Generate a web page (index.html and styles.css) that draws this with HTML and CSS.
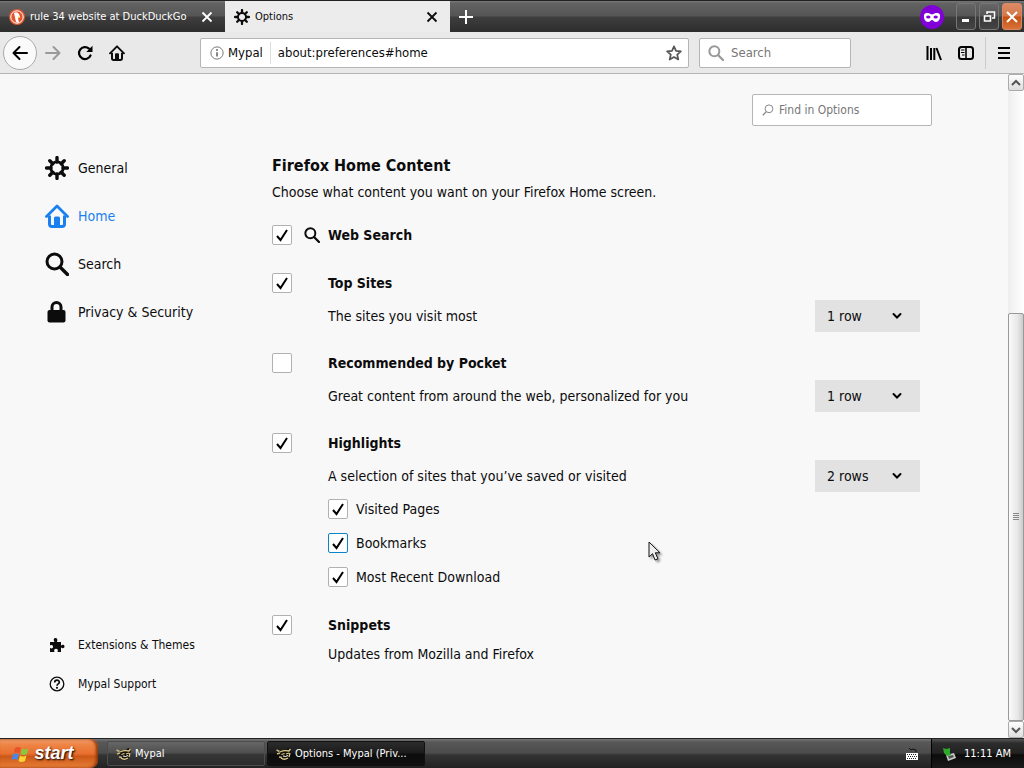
FILE: index.html
```html
<!DOCTYPE html>
<html lang="en">
<head>
    <meta charset="UTF-8">
    <meta name="viewport" content="width=device-width, initial-scale=1.0">
    <title>Options</title>
    <link rel="stylesheet" href="styles.css">
</head>
<body>
    <svg class="defs" width="0" height="0" aria-hidden="true">
        <symbol id="gear" viewBox="0 0 24 24">
            <circle cx="12" cy="12" r="6.2" fill="none" stroke="currentColor" stroke-width="2.8"/>
            <path d="M12 6V1.6M12 18v4.4M6 12H1.6M18 12h4.4M7.8 7.8L4.8 4.8M16.2 7.8l3-3M7.8 16.2l-3 3M16.2 16.2l3 3" stroke="currentColor" stroke-width="3.4" stroke-linecap="round"/>
        </symbol>
        <symbol id="house" viewBox="0 0 24 24">
            <path d="M1.500 12.5L12 2l10.500 10.500" fill="none" stroke="currentColor" stroke-width="2.800" stroke-linecap="round" stroke-linejoin="round"/>
            <path d="M4.500 11.500V20q0 2.500 2.500 2.500h10q2.500 0 2.500-2.500v-8.500" fill="none" stroke="currentColor" stroke-width="3"/>
            <path d="M9 22v-8q0-1.500 1.500-1.500h3q1.500 0 1.500 1.500v8z" fill="currentColor"/>
        </symbol>
        <symbol id="glass" viewBox="0 0 24 24">
            <circle cx="9.500" cy="9.500" r="7.500" fill="none" stroke="currentColor" stroke-width="3"/>
            <path d="M15 15l7.500 7.500" stroke="currentColor" stroke-width="3.400" stroke-linecap="round"/>
        </symbol>
        <symbol id="cross" viewBox="0 0 12 12">
            <path d="M1.500 1.500l9 9M10.500 1.500l-9 9" stroke="currentColor" stroke-width="1.800"/>
        </symbol>
        <symbol id="cat" viewBox="0 0 16 16">
            <path d="M5 4l4 1 3-3 3 1-.5 5-2 5-5 1.500-3-2 2-2-4-2z" fill="#15120c"/>
            <path d="M.5 4l3 1.500M1 8l3-1M3 11l3 .5" stroke="#c9b67e" stroke-width="1.500"/>
            <path d="M4 6q4-2 9-1l1.500-2M5.500 8.500l3-1M10 8l3-1M5 12q3 2.500 7 0M14 7l-1 4" stroke="#dcc98c" stroke-width="1.300" fill="none"/>
            <path d="M7 10l2.500.5L12 9.500" stroke="#fff" stroke-width="1" fill="none"/>
        </symbol>
    </svg>

    <header class="tabbar">
        <div class="tab">
            <svg class="favicon" viewBox="0 0 16 16">
                <circle cx="8" cy="8" r="8" fill="#e0562f"/>
                <circle cx="8" cy="8" r="6.200" fill="none" stroke="#fff" stroke-width="1"/>
                <path d="M5 4q3-2 5 1l1 3-2 1 1 5-3-1z" fill="#fff"/>
                <path d="M8.500 7.500l3 .5-2 1.500z" fill="#fc3"/>
            </svg>
            <span class="tab_label">rule 34 website at DuckDuckGo</span>
            <button class="tab_close" aria-label="Close tab"><svg><use href="#cross"/></svg></button>
        </div>
        <div class="tab selected">
            <svg class="favicon"><use href="#gear"/></svg>
            <span class="tab_label">Options</span>
            <button class="tab_close" aria-label="Close tab"><svg><use href="#cross"/></svg></button>
        </div>
        <button class="newtab" aria-label="New tab">
            <svg viewBox="0 0 16 16"><path d="M8 1v14M1 8h14" stroke="#fff" stroke-width="2"/></svg>
        </button>
        <svg class="private" viewBox="0 0 24 24">
            <circle cx="12" cy="12" r="12" fill="#8000d7"/>
            <path d="M4 10c1-3 5-2 8-.5 3-1.500 7-2.500 8 .5.500 4-1.500 7-4 7-2 0-3-2-4-2s-2 2-4 2c-2.500 0-4.500-3-4-7z" fill="#fff"/>
            <ellipse cx="8.300" cy="12" rx="2.200" ry="1.500" fill="#8000d7"/>
            <ellipse cx="15.700" cy="12" rx="2.200" ry="1.500" fill="#8000d7"/>
        </svg>
        <div class="winbuttons">
            <button aria-label="Minimize"><svg viewBox="0 0 16 16"><path d="M4 11.500h7" stroke="#fff" stroke-width="3"/></svg></button>
            <button aria-label="Restore"><svg viewBox="0 0 16 16"><path d="M6 5V3h7.500v6H11" fill="none" stroke="#fff" stroke-width="1.500"/><path d="M3.500 7h6v5h-6z" fill="none" stroke="#fff" stroke-width="1.600"/></svg></button>
            <button class="close" aria-label="Close"><svg viewBox="0 0 16 16"><path d="M3 3l10 10M13 3L3 13" stroke="#fff" stroke-width="2"/></svg></button>
        </div>
    </header>

    <nav class="toolbar">
        <button class="back" aria-label="Back"><svg viewBox="0 0 16 16"><path d="M15 8H1.500M7.500 2l-6 6 6 6" fill="none" stroke="#000" stroke-width="2" stroke-linecap="round" stroke-linejoin="round"/></svg></button>
        <button class="tool" aria-label="Forward"><svg viewBox="0 0 16 16"><path d="M1 8h13.500M8.500 2l6 6-6 6" fill="none" stroke="#999" stroke-width="2" stroke-linecap="round" stroke-linejoin="round"/></svg></button>
        <button class="tool" aria-label="Reload"><svg viewBox="0 0 16 16"><path d="M13.500 10.500A6 6 0 1 1 12 3.600" fill="none" stroke="#000" stroke-width="2.200" stroke-linecap="round"/><path d="M15.500.8V7H9.300z"/></svg></button>
        <button class="tool" aria-label="Home"><svg><use href="#house"/></svg></button>
        <div class="urlbar">
            <svg class="info" viewBox="0 0 16 16"><circle cx="8" cy="8" r="7" fill="none" stroke="#666"/><path d="M8 7v5" stroke="#666" stroke-width="1.800"/><circle cx="8" cy="4.500" r="1.100" fill="#666"/></svg>
            <span class="identity">Mypal</span>
            <input type="text" value="about:preferences#home" aria-label="Address">
            <button class="star" aria-label="Bookmark this page"><svg viewBox="0 0 16 16"><path d="M8 1.300l2 4.500 4.900.5-3.700 3.300 1.100 4.900L8 12l-4.300 2.500 1.100-4.900L1.100 6.300 6 5.800z" fill="none" stroke="#555" stroke-width="1.700" stroke-linejoin="round"/></svg></button>
        </div>
        <div class="searchbar">
            <svg><use href="#glass"/></svg>
            <input type="text" placeholder="Search" aria-label="Search the web">
        </div>
        <div class="toolbar_end">
            <button class="tool" aria-label="Library"><svg viewBox="0 0 16 16"><path d="M1.500 1v14M5 3v12M8.300 3v12M10.500 3L15 15" stroke="#000" stroke-width="2"/></svg></button>
            <button class="tool" aria-label="Sidebars"><svg viewBox="0 0 16 16"><rect x="1" y="2" width="14" height="12" rx="2.500" fill="none" stroke="#000" stroke-width="2"/><path d="M8 2v12" stroke="#000" stroke-width="1.600"/><path d="M3 5h3.500M3 7.500h3.500M4 10h2.500" stroke="#000"/></svg></button>
            <button class="tool menu" aria-label="Menu"><svg viewBox="0 0 16 16"><path d="M2 3h12M2 8h12M2 13h12" stroke="#000" stroke-width="2"/></svg></button>
        </div>
    </nav>

    <div class="content">
        <aside class="sidebar">
            <a href="#general"><svg><use href="#gear"/></svg>General</a>
            <a href="#home" class="current"><svg><use href="#house"/></svg>Home</a>
            <a href="#search"><svg><use href="#glass"/></svg>Search</a>
            <a href="#privacy"><svg viewBox="0 0 24 24"><path d="M7 11V7a4.500 4.500 0 0 1 9 0V11" fill="none" stroke="currentColor" stroke-width="3"/><rect x="2.500" y="10" width="18" height="12.500" rx="2" fill="currentColor"/></svg>Privacy &amp; Security</a>
            <div class="sidebar_foot">
                <a href="#extensions"><svg viewBox="0 0 16 16"><path d="M1 5h4.500C4 2.500 5 1 6.500 1S9 2.500 8 5h4v3.500c2-1.300 3.500-.5 3.500 1s-1.500 2.300-3.500 1V15H8.500c1-2-.2-3.200-1.500-3.200S4.500 13 5.500 15H1v-4c2 1 3 0 3-1.300S3 7.500 1 8.500z" fill="currentColor"/></svg>Extensions &amp; Themes</a>
                <a href="#support"><svg viewBox="0 0 16 16"><circle cx="8" cy="8" r="6.800" fill="none" stroke="currentColor" stroke-width="1.300"/><path d="M5.700 6.500C5.700 3.300 10.300 3.500 10.300 6.200 10.300 8 8 7.700 8 9.700" fill="none" stroke="currentColor" stroke-width="1.700"/><circle cx="8" cy="11.800" r="1.100" fill="currentColor"/></svg>Mypal Support</a>
            </div>
        </aside>

        <main>
            <div class="find">
                <svg viewBox="0 0 12 12"><circle cx="7" cy="4.800" r="3.900" fill="none" stroke="#888"/><path d="M4.300 7.600L.8 11.200" stroke="#888" stroke-width="1.300"/></svg>
                <input type="text" placeholder="Find in Options" aria-label="Find in Options">
            </div>
            <h1>Firefox Home Content</h1>
            <p class="intro">Choose what content you want on your Firefox Home screen.</p>

            <section>
                <label class="option"><input type="checkbox" checked><svg><use href="#glass"/></svg><b>Web Search</b></label>
            </section>
            <section>
                <label class="option"><input type="checkbox" checked><b>Top Sites</b></label>
                <div class="details">
                    <label for="topsites">The sites you visit most</label>
                    <select id="topsites"><option>1 row</option><option>2 rows</option></select>
                </div>
            </section>
            <section>
                <label class="option"><input type="checkbox"><b>Recommended by Pocket</b></label>
                <div class="details">
                    <label for="pocket">Great content from around the web, personalized for you</label>
                    <select id="pocket"><option>1 row</option><option>2 rows</option></select>
                </div>
            </section>
            <section>
                <label class="option"><input type="checkbox" checked><b>Highlights</b></label>
                <div class="details">
                    <label for="highlights">A selection of sites that you’ve saved or visited</label>
                    <select id="highlights"><option>1 row</option><option selected>2 rows</option></select>
                </div>
                <div class="suboptions">
                    <label><input type="checkbox" checked>Visited Pages</label>
                    <label><input type="checkbox" class="hover" checked>Bookmarks</label>
                    <label><input type="checkbox" checked>Most Recent Download</label>
                </div>
            </section>
            <section>
                <label class="option"><input type="checkbox" checked><b>Snippets</b></label>
                <p class="details note">Updates from Mozilla and Firefox</p>
            </section>
        </main>

        <div class="scrollbar">
            <button aria-label="Scroll up"><svg viewBox="0 0 10 10"><path d="M1 7l4-4 4 4" fill="none" stroke="#555" stroke-width="2"/></svg></button>
            <div class="track"></div>
            <div class="thumb"><svg viewBox="0 0 6 8"><path d="M0 .5h6M0 2.500h6M0 4.500h6M0 6.500h6" stroke="#888"/></svg></div>
            <button aria-label="Scroll down"><svg viewBox="0 0 10 10"><path d="M1 3l4 4 4-4" fill="none" stroke="#555" stroke-width="2"/></svg></button>
        </div>
        <svg class="cursor" viewBox="0 0 14 21"><path d="M1 1v15l3.500-3.300L7 19l3-1.200-2.700-6H12z" fill="#eee" stroke="#111"/></svg>
    </div>

    <footer class="taskbar">
        <button class="start">
            <svg viewBox="0 0 20 18">
                <path d="M5 3q3-2 6 0L9.500 8.500q-3-2-6 0z" fill="#e8532a"/>
                <path d="M12 3.500q3 2 6.500 0L17 9q-3.500 2-6.500 0z" fill="#8cc63f"/>
                <path d="M3 9.500q3-2 6 0L7.500 15q-3-2-6 0z" fill="#4a86e8"/>
                <path d="M10 10.500q3 2 6.500 0L15 16q-3.500 2-6.500 0z" fill="#fbd232"/>
            </svg>
            start
        </button>
        <button class="task"><svg><use href="#cat"/></svg><span>Mypal</span></button>
        <button class="task active"><svg><use href="#cat"/></svg><span>Options - Mypal (Priv...</span></button>
        <svg class="keyboard" viewBox="0 0 14 14"><path d="M4 1l2 2 2-1 3 1V5" fill="none" stroke="#111"/><rect x="1" y="6" width="12" height="7" fill="#fff"/><path d="M2 7.500h10M3 9.500h9M2 11.500h10" stroke="#222" stroke-dasharray="1 1"/></svg>
        <div class="tray">
            <svg viewBox="0 0 16 16"><path d="M5 9l8-2 2 5-8 3z" fill="#c9cdc9"/><path d="M7 10l5-1 1 2-5 2z" fill="#555"/><path d="M2 2l3 1 4-1v5l1 2-4 1-3-3z" fill="#2fa62c"/></svg>
            <span>11:11 AM</span>
        </div>
    </footer>
</body>
</html>
```
FILE: styles.css
```css
*{
    box-sizing: border-box;
}
html, body{
    margin: 0;
    height: 100%;
}
body{
    display: flex;
    flex-direction: column;
    overflow: hidden;
    font-family: Tahoma, 'DejaVu Sans Condensed', 'Noto Sans', sans-serif;
    font-size: 14px;
    color: #0c0c0d;
    background: #f9f9fa;
}
button, input, select{
    font: inherit;
    color: inherit;
}
button{
    display: flex;
    align-items: center;
    justify-content: center;
    border: 0;
    padding: 0;
    background: none;
}
input[type=text]{
    flex: 1;
    min-width: 0;
    border: 0;
    padding: 0;
    outline: 0;
    background: none;
}
input::placeholder{
    color: #777;
    opacity: 1;
}
svg{
    flex: none;
}
.defs{
    position: absolute;
}

/* tab strip */
.tabbar{
    display: flex;
    align-items: center;
    height: 32px;
    border-top: 1px solid #222;
    background: linear-gradient(#777 0, #626262 8%, #555 48%, #3e3e3e 52%, #2d2d2d 100%);
}
.tab{
    display: flex;
    align-items: center;
    width: 225px;
    height: 31px;
    padding: 0 12px 0 9px;
    color: #fff;
    font-size: 11px;
}
.tab.selected{
    color: #0c0c0d;
    background: #ececec;
}
.favicon{
    width: 16px;
    height: 16px;
    margin-right: 5px;
}
.tab_label{
    flex: 1;
    white-space: nowrap;
}
.tab_close svg{
    width: 12px;
    height: 12px;
}
.newtab{
    width: 32px;
    height: 31px;
}
.newtab svg{
    width: 16px;
    height: 16px;
}
.private{
    width: 24px;
    height: 24px;
    margin: 0 12px 0 auto;
}
.winbuttons{
    display: flex;
    gap: 3px;
    padding-right: 2px;
}
.winbuttons button{
    width: 20px;
    height: 27px;
    border: 1px solid #777;
    border-radius: 3px;
    background: linear-gradient(#666, #555 48%, #383838 52%, #444);
}
.winbuttons .close{
    border-color: #d98662;
    background: linear-gradient(#dc8b68, #d47748 48%, #c45010 52%, #d8743c);
}
.winbuttons svg{
    width: 16px;
    height: 16px;
}

/* navigation */
.toolbar{
    display: flex;
    align-items: center;
    height: 42px;
    padding: 0 3px;
    border-bottom: 1px solid #b4b4b4;
    background: #e9e9e9;
}
.back{
    width: 34px;
    height: 34px;
    border: 1px solid #aaa;
    border-radius: 50%;
    background: #fafafa;
}
.tool{
    width: 32px;
    height: 32px;
}
.back svg, .tool svg{
    width: 16px;
    height: 16px;
}
.urlbar, .searchbar{
    display: flex;
    align-items: center;
    height: 30px;
    border: 1px solid #b5b5b5;
    border-radius: 2px;
    background: #fff;
    font-size: 13px;
}
.urlbar{
    flex: 1;
    margin: 0 10px 0 67px;
    padding: 0 6px 0 9px;
}
.info{
    width: 14px;
    height: 14px;
    margin-right: 4px;
}
.identity{
    padding-right: 7px;
    margin-right: 7px;
    border-right: 1px solid #ddd;
    line-height: 22px;
}
.star svg{
    width: 16px;
    height: 16px;
}
.searchbar{
    width: 152px;
    padding: 0 8px;
}
.searchbar svg{
    width: 16px;
    height: 16px;
    margin-right: 7px;
    color: #999;
}
.toolbar_end{
    display: flex;
    margin-left: 67px;
}
.menu{
    margin-left: 3px;
    border-left: 1px solid #ccc;
    width: 36px;
}

/* preferences page */
.content{
    position: relative;
    flex: 1;
    min-height: 0;
    display: flex;
    background: #f8f8f8;
}
.sidebar{
    display: flex;
    flex-direction: column;
    width: 272px;
    padding: 70px 0 35px 45px;
}
.sidebar a{
    display: flex;
    align-items: center;
    gap: 9px;
    height: 48px;
    color: inherit;
    text-decoration: none;
}
.sidebar a svg{
    width: 24px;
    height: 24px;
}
.sidebar .current{
    color: #1a80f0;
}
.sidebar_foot{
    margin-top: auto;
    font-size: 12px;
}
.sidebar_foot a{
    height: 39px;
}
.sidebar_foot a svg{
    padding: 0 4px;
}
main{
    flex: 1;
    max-width: 660px;
    padding-top: 20px;
}
.find{
    display: flex;
    align-items: center;
    width: 180px;
    height: 32px;
    margin: 0 0 28px auto;
    padding: 0 9px;
    border: 1px solid #b5b5b5;
    border-radius: 2px;
    background: #fff;
    font-size: 12px;
}
.find svg{
    width: 12px;
    height: 12px;
    margin-right: 5px;
}
h1{
    margin: 0 0 4px;
    font-size: 16px;
    line-height: 24px;
}
.intro{
    margin: 0 0 23px;
    line-height: 20px;
}
section{
    display: flow-root;
    margin: 0 12px 21px 0;
}
.option{
    display: grid;
    grid-template-columns: 32px 24px 1fr;
    align-items: center;
    height: 20px;
    margin-bottom: 7px;
}
.option b{
    grid-column: 3;
}
.option svg{
    width: 16px;
    height: 16px;
}
input[type=checkbox]{
    appearance: none;
    width: 20px;
    height: 20px;
    margin: 0;
    border: 1px solid #b1b1b1;
    border-radius: 2px;
    background: #fff;
}
input[type=checkbox]:checked{
    background: #fff url("data:image/svg+xml,%3Csvg xmlns='http://www.w3.org/2000/svg' viewBox='0 0 18 18'%3E%3Cpath d='M4 10l3.500 4L14 4' fill='none' stroke='%23000' stroke-width='2'/%3E%3C/svg%3E") center / 18px no-repeat;
}
input[type=checkbox].hover{
    border-color: #0a84c8;
}
.details{
    display: flex;
    align-items: center;
    justify-content: space-between;
    margin: 0 0 0 56px;
    height: 32px;
}
.details.note{
    height: 24px;
}
select{
    appearance: none;
    width: 105px;
    height: 32px;
    padding: 0 12px;
    border: 0;
    background: #e2e2e2 url("data:image/svg+xml,%3Csvg xmlns='http://www.w3.org/2000/svg' viewBox='0 0 10 8'%3E%3Cpath d='M1.500 2L5 5.500 8.500 2' fill='none' stroke='%23000' stroke-width='2' stroke-linecap='round'/%3E%3C/svg%3E") right 18px center / 10px 8px no-repeat;
}
.suboptions{
    display: flex;
    flex-direction: column;
    gap: 14px;
    margin: 7px 0 7px 56px;
}
.suboptions label{
    display: flex;
    align-items: center;
    gap: 8px;
    height: 20px;
}

.scrollbar{
    display: flex;
    flex-direction: column;
    width: 16px;
    margin-left: auto;
    background: linear-gradient(90deg, #eee, #fff);
}
.scrollbar button{
    height: 17px;
    border: 1px solid #aaa;
    border-radius: 2px;
    background: linear-gradient(#fff, #ddd);
}
.scrollbar button svg{
    width: 10px;
    height: 10px;
}
.track{
    flex: 223;
}
.thumb{
    flex: 407;
    display: flex;
    align-items: center;
    justify-content: center;
    border: 1px solid #999;
    border-radius: 2px;
    background: linear-gradient(90deg, #fafafa, #e8e8e8 60%, #ccc);
}
.thumb svg{
    width: 6px;
    height: 8px;
}
.cursor{
    position: absolute;
    left: 648px;
    top: 467px;
    width: 14px;
    height: 21px;
    filter: drop-shadow(2px 2px 1px #0006);
}

/* taskbar */
.taskbar{
    display: flex;
    align-items: center;
    height: 30px;
    color: #fff;
    font-size: 11px;
    border-top: 1px solid #222;
    background: linear-gradient(#777, #585858 10%, #4c4c4c 48%, #343434 55%, #222);
}
.start{
    gap: 4px;
    width: 98px;
    height: 29px;
    margin-right: 9px;
    padding-right: 14px;
    border-radius: 0 8px 8px 0;
    font: italic bold 18px 'Liberation Sans', sans-serif;
    text-shadow: 1px 1px 2px #000;
    background: linear-gradient(#f0a070, #ee8444 20%, #e87030 50%, #cc5818 60%, #e88038);
    box-shadow: inset -2px 0 3px #8a3408;
}
.start svg{
    width: 20px;
    height: 18px;
}
.task{
    justify-content: flex-start;
    gap: 3px;
    width: 158px;
    height: 25px;
    margin-right: 2px;
    padding: 0 8px;
    border: 1px solid #4c4c4c;
    border-radius: 2px;
    background: linear-gradient(#666, #505050 45%, #363636 55%, #2c2c2c);
}
.task.active{
    border-color: #111;
    background: linear-gradient(#2c2c2c, #1c1c1c 45%, #0c0c0c 55%, #111);
}
.task svg{
    width: 16px;
    height: 16px;
}
.keyboard{
    width: 14px;
    height: 14px;
    margin: 0 12px 0 auto;
}
.tray{
    display: flex;
    align-items: center;
    gap: 7px;
    height: 29px;
    padding: 0 13px 0 9px;
    border-left: 1px solid #000;
    background: linear-gradient(#555, #2c2c2c 15%, #222 48%, #0c0c0c 55%, #1a1a1a);
}
.tray svg{
    width: 16px;
    height: 16px;
}
```
